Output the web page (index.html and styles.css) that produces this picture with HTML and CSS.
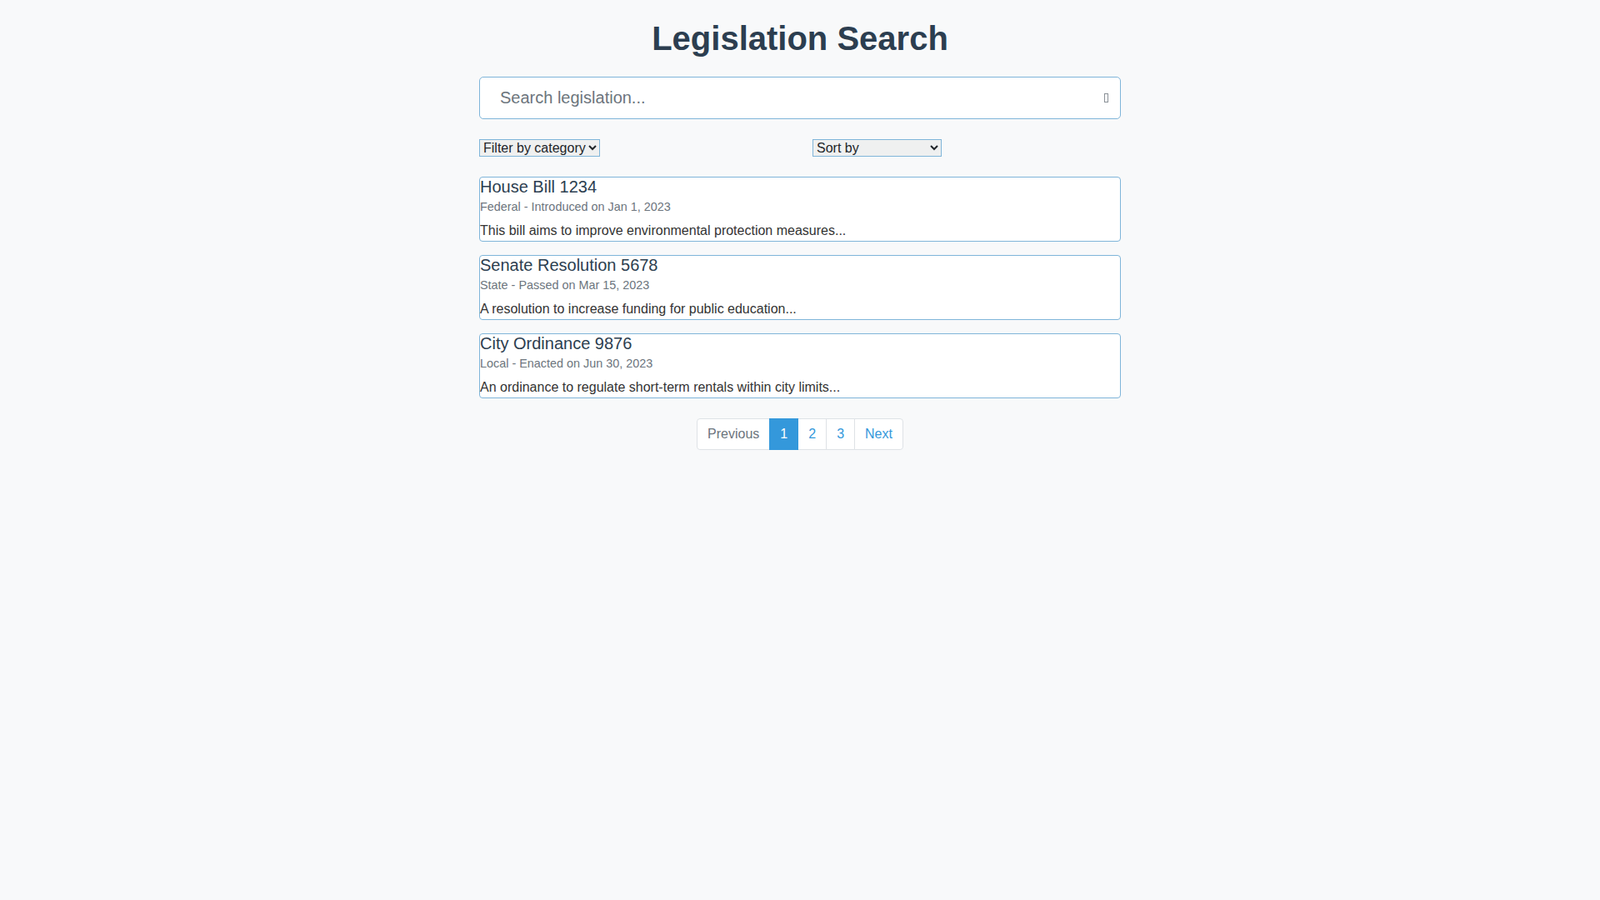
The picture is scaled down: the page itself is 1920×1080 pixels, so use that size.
FILE: index.html
```html
<!DOCTYPE html>
<html lang="en">
<head>
    <meta charset="UTF-8">
    <meta name="viewport" content="width=device-width, initial-scale=1.0">
    <title>Legislation Search</title>
    <link rel="stylesheet" href="styles.css">
</head>
<body>
    <div class="container">
        <h1>Legislation Search</h1>

        <div class="search-box">
            <input class="search-input" type="text" placeholder="Search legislation...">
            <span class="search-icon"></span>
        </div>

        <div class="filters">
            <div class="filter-col">
                <select class="filter-select">
                    <option>Filter by category</option>
                </select>
            </div>
            <div class="filter-col">
                <select class="filter-select sort-select">
                    <option>Sort by</option>
                </select>
            </div>
        </div>

        <div class="result">
            <h5>House Bill 1234</h5>
            <p class="meta">Federal - Introduced on Jan 1, 2023</p>
            <p class="summary">This bill aims to improve environmental protection measures...</p>
        </div>
        <div class="result">
            <h5>Senate Resolution 5678</h5>
            <p class="meta">State - Passed on Mar 15, 2023</p>
            <p class="summary">A resolution to increase funding for public education...</p>
        </div>
        <div class="result">
            <h5>City Ordinance 9876</h5>
            <p class="meta">Local - Enacted on Jun 30, 2023</p>
            <p class="summary">An ordinance to regulate short-term rentals within city limits...</p>
        </div>

        <ul class="pagination">
            <li class="page-link disabled">Previous</li>
            <li class="page-link active">1</li>
            <li class="page-link">2</li>
            <li class="page-link">3</li>
            <li class="page-link">Next</li>
        </ul>
    </div>
</body>
</html>
```

FILE: styles.css
```css
* {
    box-sizing: border-box;
}

body {
    margin: 0;
    font-family: "Liberation Sans", Arial, sans-serif;
    font-size: 16px;
    line-height: 1.5;
    color: #333;
    background-color: #f8f9fa;
}

.container {
    width: 800px;
    margin: 0 auto;
    padding: 0 15px;
}

h1 {
    margin: 0 0 22px;
    padding-top: 22px;
    font-size: 40px;
    font-weight: 700;
    line-height: 1.2;
    text-align: center;
    color: #2c3e50;
}

.search-box {
    position: relative;
    margin-bottom: 24px;
}

.search-input {
    display: block;
    width: 100%;
    height: 51px;
    padding: 8px 24px;
    font-family: inherit;
    font-size: 20px;
    line-height: 1.5;
    color: #495057;
    background-color: #fff;
    border: 1px solid #7fb5d9;
    border-radius: 5px;
}

.search-input::placeholder {
    color: #6c757d;
}

.search-icon {
    position: absolute;
    top: 20px;
    right: 15px;
    width: 5px;
    height: 11px;
    border: 1px solid #8a9197;
}

.filters {
    display: flex;
    margin: 0 -15px 24px;
}

.filter-col {
    width: 50%;
    padding: 0 15px;
    line-height: 0;
}

.filter-select {
    font-family: inherit;
    font-size: 16px;
    color: #212529;
    background-color: #eff0f0;
    border: 1px solid #7fb5d9;
    border-radius: 0;
}

.sort-select {
    width: 155px;
}

.result {
    margin-bottom: 16px;
    background-color: #fff;
    border: 1px solid #7fb5d9;
    border-radius: 4px;
}

.result h5 {
    margin: 0 0 3px;
    font-size: 20px;
    font-weight: 500;
    line-height: 22px;
    color: #2c3e50;
}

.meta {
    margin: 0 0 5.4px;
    font-size: 14.4px;
    color: #6c757d;
}

.summary {
    margin: 0;
}

.pagination {
    display: flex;
    justify-content: center;
    margin: 24px 0 16px;
    padding: 0;
    list-style: none;
}

.page-link {
    margin-left: -1px;
    padding: 8px 12px;
    line-height: 20px;
    color: #3498db;
    background-color: #fff;
    border: 1px solid #dee2e6;
}

.page-link:first-child {
    margin-left: 0;
    border-radius: 4px 0 0 4px;
}

.page-link:last-child {
    border-radius: 0 4px 4px 0;
}

.page-link.disabled {
    color: #6c757d;
}

.page-link.active {
    position: relative;
    z-index: 1;
    color: #fff;
    background-color: #3498db;
    border-color: #3498db;
}
```
